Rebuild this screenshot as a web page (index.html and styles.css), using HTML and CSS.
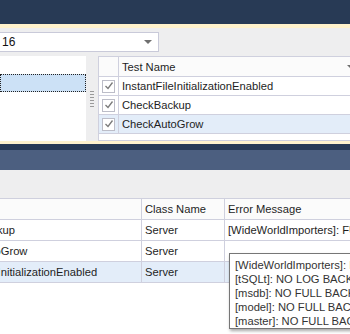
FILE: index.html
```html
<!DOCTYPE html>
<html lang="en">
<head>
    <meta charset="UTF-8">
    <title>Test results</title>
    <link rel="stylesheet" href="styles.css">
</head>
<body>
    <div class="titlebar"></div>
    <div class="accent"></div>
    <div class="toolbar">
        <div class="combo">
            <span class="combo-text">16</span>
            <span class="combo-arrow"></span>
        </div>
    </div>

    <div class="top-pane">
        <div class="tree">
            <div class="tree-row"></div>
            <div class="tree-row selected"></div>
        </div>
        <div class="splitter"><div class="grip"></div></div>
        <div class="grid tests">
            <div class="row head">
                <div class="cell check"></div>
                <div class="cell name">Test Name<span class="filter"></span></div>
            </div>
            <div class="row">
                <div class="cell check"><span class="box"><svg width="10" height="10" viewBox="0 0 10 10"><polyline points="1.5,5 4,7.5 8.5,1.5" fill="none" stroke="#7a7a7a" stroke-width="1.3"/></svg></span></div>
                <div class="cell name">InstantFileInitializationEnabled</div>
            </div>
            <div class="row">
                <div class="cell check"><span class="box"><svg width="10" height="10" viewBox="0 0 10 10"><polyline points="1.5,5 4,7.5 8.5,1.5" fill="none" stroke="#7a7a7a" stroke-width="1.3"/></svg></span></div>
                <div class="cell name">CheckBackup</div>
            </div>
            <div class="row selected">
                <div class="cell check"><span class="box"><svg width="10" height="10" viewBox="0 0 10 10"><polyline points="1.5,5 4,7.5 8.5,1.5" fill="none" stroke="#7a7a7a" stroke-width="1.3"/></svg></span></div>
                <div class="cell name">CheckAutoGrow</div>
            </div>
        </div>
    </div>

    <div class="accent thin"></div>
    <div class="dark-strip"></div>
    <div class="tabbar"></div>
    <div class="toolbar lower"></div>

    <div class="grid results">
        <div class="row head">
            <div class="cell test"></div>
            <div class="cell cls">Class Name</div>
            <div class="cell msg">Error Message</div>
        </div>
        <div class="row">
            <div class="cell test">CheckBackup</div>
            <div class="cell cls">Server</div>
            <div class="cell msg">[WideWorldImporters]: FULL BACKUP OLD</div>
        </div>
        <div class="row">
            <div class="cell test">CheckAutoGrow</div>
            <div class="cell cls">Server</div>
            <div class="cell msg"></div>
        </div>
        <div class="row selected">
            <div class="cell test">InstantFileInitializationEnabled</div>
            <div class="cell cls">Server</div>
            <div class="cell msg"></div>
        </div>
    </div>

    <div class="tooltip">
        <p>[WideWorldImporters]: NO FULL BACKUP</p>
        <p>[tSQLt]: NO LOG BACKUP</p>
        <p>[msdb]: NO FULL BACKUP</p>
        <p>[model]: NO FULL BACKUP</p>
        <p>[master]: NO FULL BACKUP</p>
    </div>
</body>
</html>
```

FILE: styles.css
```css
html{
    box-sizing: border-box;
}
*,*::before,*::after{
    box-sizing: inherit;
    padding: 0;
    margin: 0;
}
body{
    width: 350px;
    height: 334px;
    overflow: hidden;
    position: relative;
    background-color: #ffffff;
    font-family: "Liberation Sans", Arial, sans-serif;
    font-size: 11.2px;
    color: #1e1e1e;
}
.titlebar{
    height: 24px;
    background-color: #283a55;
}
.accent{
    height: 4px;
    background-color: #fff2cc;
}
.accent.thin{
    height: 3px;
}
.toolbar{
    height: 28px;
    padding-top: 4px;
    background-color: #eeeeef;
}
.combo{
    display: flex;
    align-items: center;
    width: 170px;
    height: 20px;
    margin-left: -11px;
    padding-left: 12px;
    padding-right: 6px;
    background-color: #fff;
    border: 1px solid #c9cad9;
    font-size: 12px;
    color: #111;
}
.combo-text{
    flex: 1;
}
.combo-arrow{
    width: 0;
    height: 0;
    border-left: 4px solid transparent;
    border-right: 4px solid transparent;
    border-top: 4px solid #6f6f6f;
}
.top-pane{
    display: flex;
    height: 85px;
    background-color: #eeeeef;
}
.tree{
    width: 86px;
    background-color: #fff;
}
.tree-row{
    height: 18px;
}
.tree-row.selected{
    background-color: #cce1f6;
    border: 1px dotted #222;
}
.splitter{
    width: 12px;
    display: flex;
    align-items: center;
    justify-content: center;
}
.grip{
    width: 4px;
    height: 18px;
    background-image: radial-gradient(circle, #9a9a9a 45%, transparent 50%);
    background-size: 2px 3px;
}
.grid{
    background-color: #fff;
}
.tests{
    flex: 1;
    border-top: 1px solid #cfd0de;
    border-left: 1px solid #cfd0de;
    border-bottom: 1px solid #cfd0de;
}
.row{
    display: flex;
    height: 19px;
    border-bottom: 1px solid #cfd0de;
}
.row.head{
    height: 20px;
    background-color: #fbfbfb;
}
.row.selected{
    background-color: #e3edf9;
}
.cell{
    display: flex;
    align-items: center;
    white-space: nowrap;
    overflow: hidden;
}
.check{
    width: 20px;
    border-right: 1px solid #cfd0de;
    padding-left: 3px;
}
.box{
    display: flex;
    align-items: center;
    justify-content: center;
    width: 13px;
    height: 13px;
    background-color: #fff;
    border: 1px solid #bcbdc8;
}
.name{
    flex: 1;
    padding-left: 3px;
}
.filter{
    margin-left: auto;
    margin-right: -5px;
    width: 0;
    height: 0;
    border-left: 4px solid transparent;
    border-right: 4px solid transparent;
    border-top: 4px solid #6f6f6f;
}
.dark-strip{
    height: 6px;
    background-color: #283a55;
}
.tabbar{
    height: 20px;
    background-color: #4c5f80;
}
.toolbar.lower{
    height: 28px;
    padding: 0;
}
.results{
    margin-left: -58px;
    border-top: 1px solid #cfd0de;
}
.results .row{
    height: 21px;
}
.test{
    width: 200px;
    padding-left: 4px;
    border-right: 1px solid #cfd0de;
}
.cls{
    width: 83px;
    padding-left: 3px;
    border-right: 1px solid #cfd0de;
}
.msg{
    flex: 1;
    padding-left: 3px;
}
.tooltip{
    position: absolute;
    left: 229px;
    top: 253px;
    width: 200px;
    height: 76px;
    padding: 4px 0 0 5px;
    background-color: #fff;
    border: 1px solid #767676;
    box-shadow: 1px 2px 3px rgba(0, 0, 0, 0.35);
    color: #333;
}
.tooltip p{
    line-height: 14px;
    white-space: nowrap;
}
```
